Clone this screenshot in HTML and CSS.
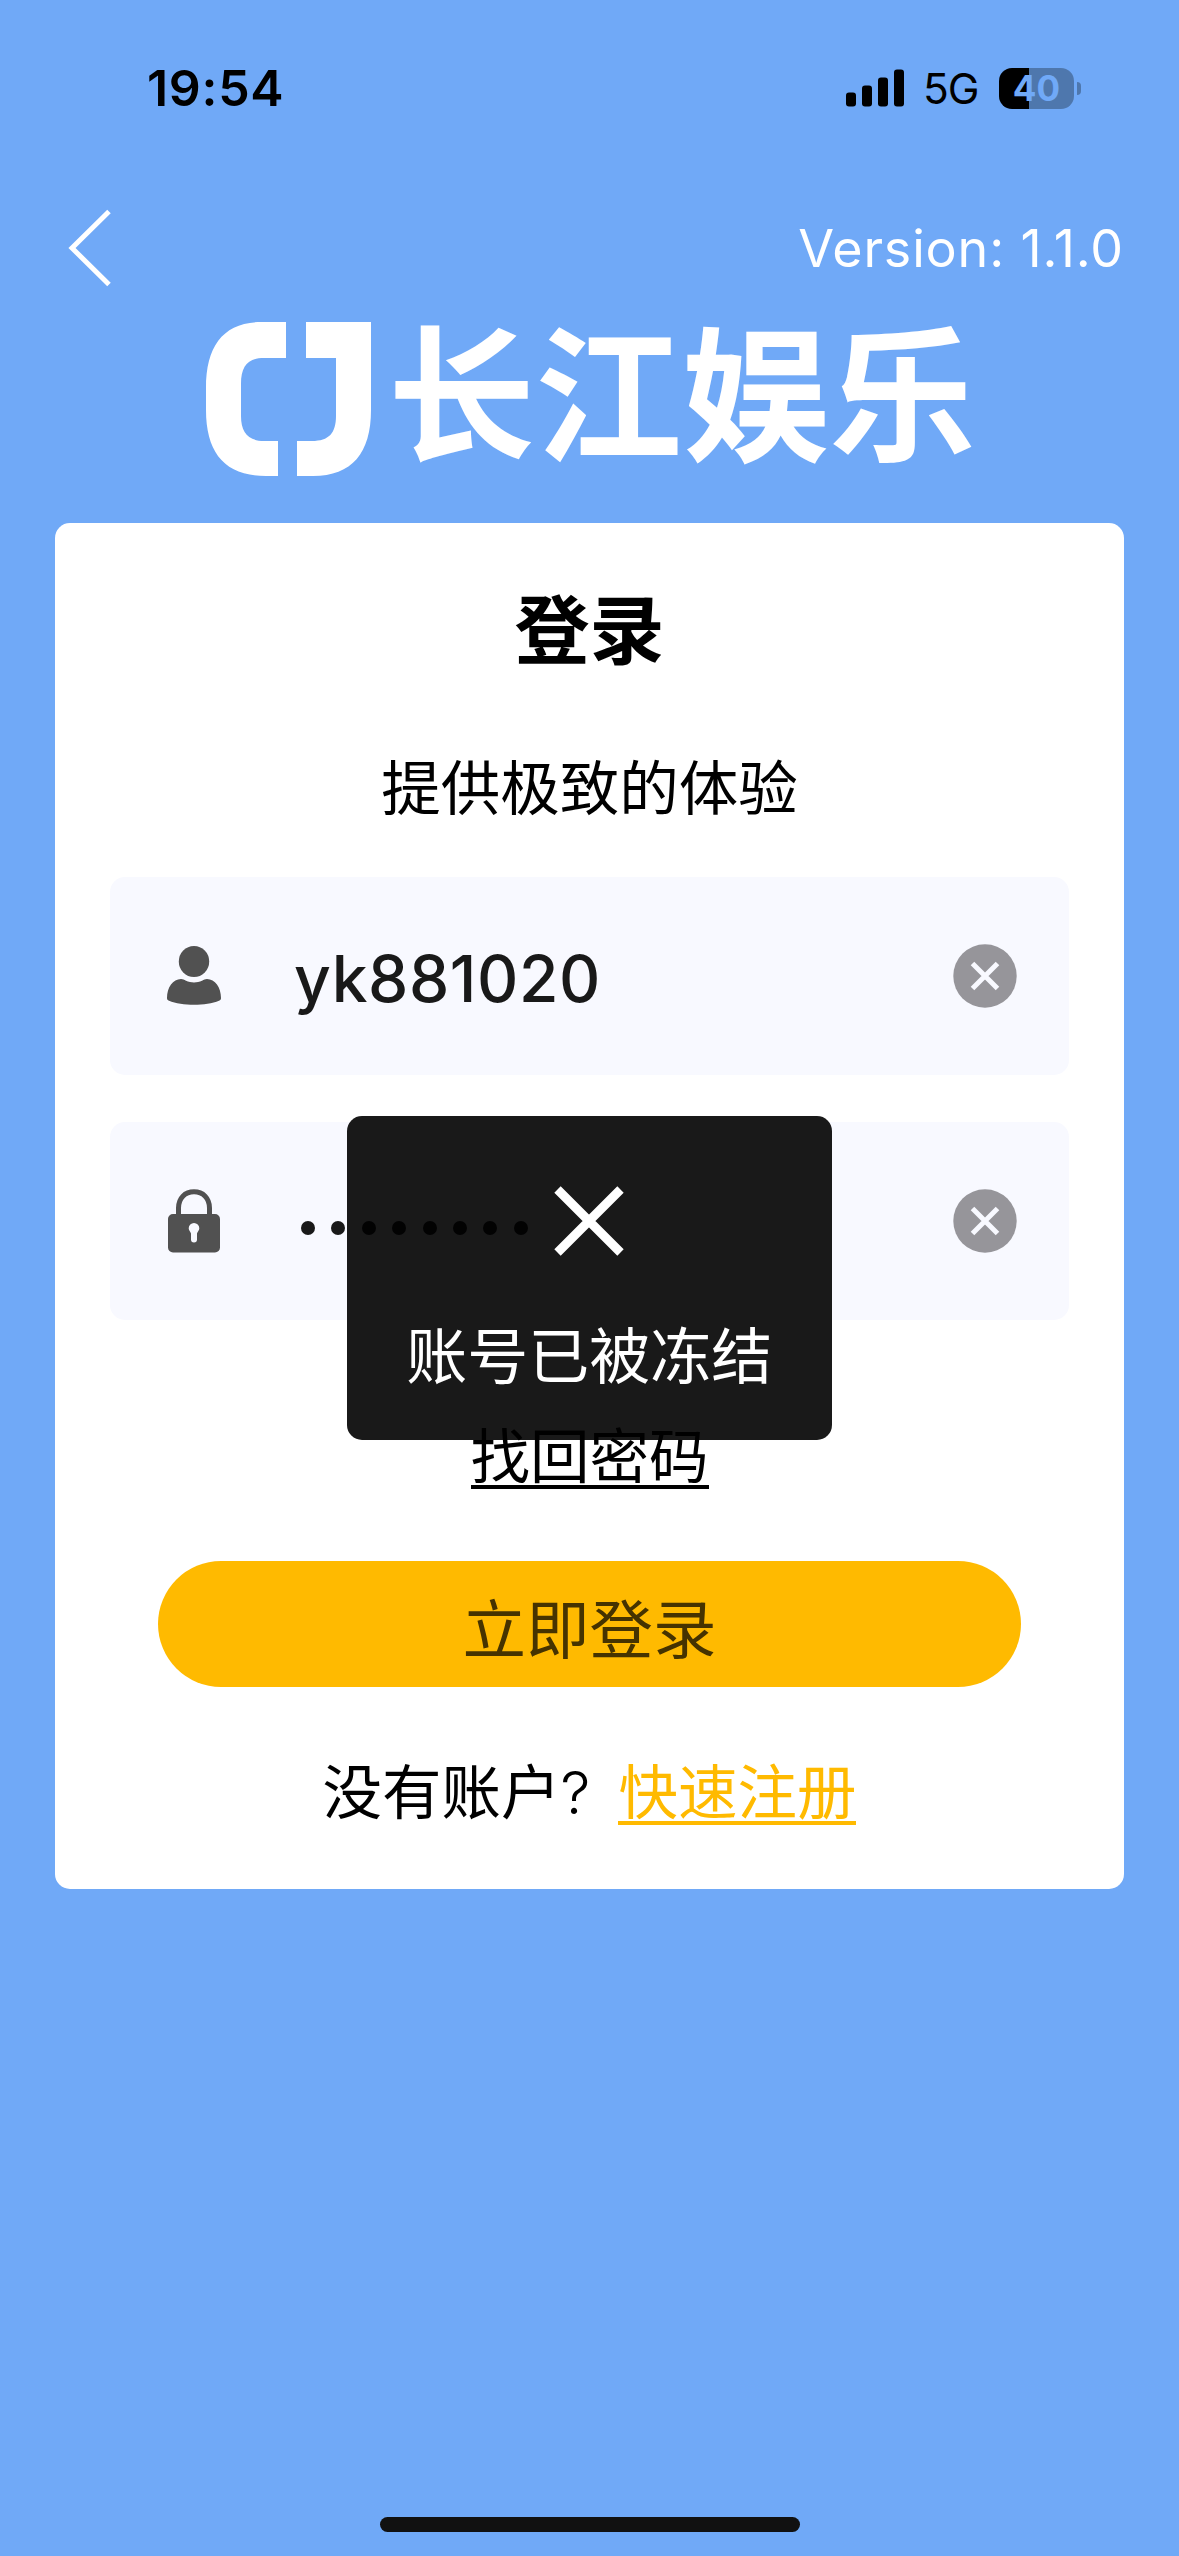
FILE: index.html
```html
<!DOCTYPE html>
<html lang="zh-CN">
<head>
<meta charset="utf-8">
<title>登录</title>
<link rel="stylesheet" href="styles.css">
</head>
<body>
<div class="screen">
  <header class="status">
    <span class="time">19:54</span>
    <div class="status-icons">
      <svg class="signal" width="58" height="38" viewBox="0 0 58 38">
        <rect x="0" y="23.5" width="10" height="14" rx="3"/>
        <rect x="16" y="16.5" width="10" height="21" rx="3"/>
        <rect x="32" y="8.5" width="10" height="29" rx="3"/>
        <rect x="48" y="0.5" width="10" height="37" rx="3"/>
      </svg>
      <span class="network">5G</span>
      <div class="battery"><span class="level">40</span><i class="nub"></i></div>
    </div>
  </header>

  <nav class="nav">
    <svg class="back" width="44" height="78" viewBox="0 0 44 78"><path d="M41 2.5 4 39l37 36.5"/></svg>
    <span class="version">Version: 1.1.0</span>
  </nav>

  <div class="logo">
    <svg width="165" height="154" viewBox="0 0 165 154">
      <path d="M80 0H56C18 0 0 23 0 66v22c0 43 19 66 60 66h12v-35H58c-16 0-23-9-23-25V62c0-18 7-26 23-26h22z"/>
      <path d="M100 0h65v88c0 43-19 66-58 66H91v-35h15c17 0 24-8 24-25V36h-30z"/>
    </svg>
    <span class="brand">长江娱乐</span>
  </div>

  <main class="card">
    <h1 class="title">登录</h1>
    <p class="subtitle">提供极致的体验</p>

    <div class="field">
      <svg class="field-icon" width="54" height="64" viewBox="0 0 54 64">
        <ellipse cx="27" cy="17.500" rx="15.200" ry="15.500"/>
        <path d="M14 35c2 0 3 .8 5 1.800 5 2.300 11 2.300 16 0 2-1 3-1.800 5-1.800 8 0 14 8.500 14 19 0 1.600-.6 2-2 2.700-13 5.300-37 5.300-50 0C.6 56 0 55.600 0 54c0-10.500 6-19 14-19z"/>
      </svg>
      <span class="value">yk881020</span>
      <svg class="clear" width="64" height="64" viewBox="0 0 64 64"><circle cx="32" cy="32" r="31.700"/><path d="M19.500 19.500l25 25m0-25l-25 25"/></svg>
    </div>

    <div class="field">
      <svg class="field-icon" width="54" height="64" viewBox="0 0 54 64">
        <path class="shackle" d="M11.500 28V19C11.500 9 18 2.800 27 2.800S42.500 9 42.500 19v9"/>
        <path fill-rule="evenodd" d="M6 25h42a5 5 0 0 1 5 5v28.500a5 5 0 0 1-5 5H6a5 5 0 0 1-5-5V30a5 5 0 0 1 5-5zm21 9a5.300 5.300 0 0 0-5.300 5.300c0 2.200 1.800 3.700 2.300 5.200v6a3 3 0 0 0 6 0v-6c.5-1.500 2.300-3 2.300-5.200A5.300 5.300 0 0 0 27 34z"/>
      </svg>
      <span class="dots"><i></i><i></i><i></i><i></i><i></i><i></i><i></i><i></i></span>
      <svg class="clear" width="64" height="64" viewBox="0 0 64 64"><circle cx="32" cy="32" r="31.700"/><path d="M19.500 19.500l25 25m0-25l-25 25"/></svg>
    </div>

    <div class="forgot"><span class="underlined">找回密码</span></div>
    <div class="submit"><span class="submit-label">立即登录</span></div>
    <div class="signup"><span class="question">没有账户<span class="mark">?</span></span><span class="underlined accent">快速注册</span></div>
  </main>

  <div class="home"></div>

  <div class="toast">
    <svg class="toast-icon" width="70" height="70" viewBox="0 0 70 70"><path d="M3.500 3.500l63 63m0-63l-63 63"/></svg>
    <span class="toast-text">账号已被冻结</span>
  </div>
</div>
</body>
</html>
```
FILE: styles.css
```css
* { box-sizing: border-box; }
body { margin: 0; }
.screen {
  position: relative;
  display: flex;
  flex-direction: column;
  width: 1179px;
  height: 2556px;
  overflow: hidden;
  background: #70a9f7;
  color: #000;
  font-family: Inter, "Noto Sans CJK SC", sans-serif;
}
.status {
  display: flex;
  justify-content: space-between;
  align-items: center;
  height: 176px;
  padding: 0 98px 0 147px;
}
.time { font-size: 50px; font-weight: 600; line-height: 60px; letter-spacing: 0.7px; }
.status-icons { display: flex; align-items: center; }
.network { width: 56px; margin: 2px 20px 0 19px; font-size: 42.5px; font-weight: 400; line-height: 50px; letter-spacing: -1px; }
.battery {
  position: relative;
  width: 75px;
  height: 41px;
  margin-right: 7px;
  border-radius: 13px;
  background: linear-gradient(90deg, #000 30px, #4e77ad 30px);
  color: #70a9f7;
  font-size: 35px;
  font-weight: 700;
  line-height: 41px;
  text-align: center;
}
.nub { position: absolute; left: 78px; top: 14px; width: 4px; height: 13px; border-radius: 0 4px 4px 0; background: #4e77ad; }
.nav { display: flex; justify-content: space-between; align-items: center; height: 144px; padding: 0 55px 0 68px; }
.back { fill: none; stroke: #fff; stroke-width: 5; }
.version { margin-top: 2px; color: #fff; font-size: 52px; font-weight: 400; line-height: 64px; letter-spacing: 0.85px; }
.logo { display: flex; align-items: flex-start; height: 203px; padding: 2px 0 0 206px; }
.logo svg { fill: #fff; }
.brand { margin: -21px 0 0 17px; color: #fff; font-family: "Noto Sans CJK SC", sans-serif; font-size: 147px; font-weight: 700; line-height: 170px; white-space: nowrap; }
.card {
  display: flex;
  flex-direction: column;
  height: 1366px;
  margin: 0 55px;
  padding: 58px 55px 0;
  border-radius: 15px;
  background: #fff;
}
.title { margin: 0; font-size: 75px; font-weight: 700; line-height: 100px; text-align: center; }
.subtitle { margin: 67px 0 49px; font-size: 59.5px; font-weight: 400; line-height: 80px; text-align: center; }
.field { display: flex; align-items: center; height: 198px; padding: 0 52px 0 57px; border-radius: 15px; background: #f8f9ff; }
.field + .field { margin-top: 47px; }
.field-icon { flex: none; margin-right: 73px; fill: #515151; }
.shackle { fill: none; stroke: #515151; stroke-width: 5; }
.value { margin-top: 5px; color: #191919; font-size: 64px; font-weight: 500; line-height: 80px; letter-spacing: 0.6px; }
.clear { flex: none; margin-left: auto; fill: #96959a; }
.clear path { stroke: #f8f9ff; stroke-width: 5; }
.dots { display: flex; gap: 16.400px; margin: 14px 0 0 7px; }
.dots i { width: 14px; height: 14px; border-radius: 50%; background: #191919; }
.forgot { display: flex; justify-content: center; margin: 92px 0 72px; font-size: 59.5px; font-weight: 400; line-height: 88px; }
.underlined { height: 77px; border-bottom: 4px solid #000; white-space: nowrap; }
.accent { border-color: #ffba00; color: #ffba00; }
.submit { height: 126px; margin: 0 48px; padding-top: 22px; border-radius: 63px; background: #ffba00; }
.submit-label { display: block; color: #463300; font-size: 63.5px; font-weight: 400; line-height: 94px; text-align: center; }
.signup { display: flex; justify-content: center; gap: 28px; margin-top: 61px; font-size: 59.5px; font-weight: 400; line-height: 88px; }
.mark { font-weight: 300; }
.home { width: 420px; height: 15px; margin: auto 0 24px 380px; border-radius: 8px; background: #111; }
.toast {
  position: absolute;
  left: 346.500px;
  top: 1116px;
  display: flex;
  flex-direction: column;
  align-items: center;
  width: 485.500px;
  height: 324px;
  padding-top: 70px;
  border-radius: 15px;
  background: rgba(0, 0, 0, 0.9);
}
.toast-icon { stroke: #fff; stroke-width: 9; }
.toast-text { margin-top: 61px; color: #fff; font-size: 61px; font-weight: 400; line-height: 80px; white-space: nowrap; }
```
